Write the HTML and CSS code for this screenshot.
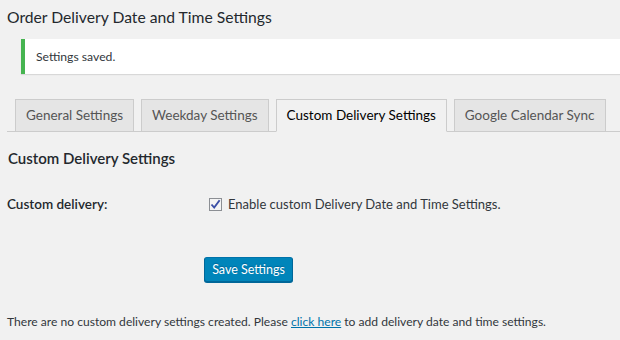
FILE: index.html
```html
<!DOCTYPE html>
<html lang="en">
<head>
    <meta charset="UTF-8">
    <title>Order Delivery Date and Time Settings</title>
    <link rel="stylesheet" href="styles.css">
</head>
<body>
    <div class="wrap">
        <h1>Order Delivery Date and Time Settings</h1>
        <div class="notice">
            <p>Settings saved.</p>
        </div>
        <nav class="tabs">
            <a href="#" class="tab">General Settings</a>
            <a href="#" class="tab">Weekday Settings</a>
            <a href="#" class="tab tab-active">Custom Delivery Settings</a>
            <a href="#" class="tab">Google Calendar Sync</a>
        </nav>
        <h2>Custom Delivery Settings</h2>
        <div class="field-row">
            <div class="field-label">Custom delivery:</div>
            <label class="field-input">
                <span class="check">
                    <svg width="11" height="11" viewBox="0 0 11 11"><path d="M1.5 5.5 L4.2 8.6 L9.6 1.2" fill="none" stroke="#3b4fa6" stroke-width="1.9"/></svg>
                </span>
                Enable custom Delivery Date and Time Settings.
            </label>
        </div>
        <div class="actions">
            <button type="button" class="button-primary">Save Settings</button>
        </div>
        <p class="empty-note">There are no custom delivery settings created. Please <a href="#">click here</a> to add delivery date and time settings.</p>
    </div>
</body>
</html>
```

FILE: styles.css
```css
body {
    margin: 0;
    background-color: #f1f1f1;
    color: #23282d;
    font-family: Lato, "Open Sans", sans-serif;
    font-size: 12px;
}
.wrap {
    padding: 0 0 0 7px;
}
h1 {
    margin: 0;
    padding-top: 6px;
    font-size: 15.7px;
    font-weight: 400;
    line-height: 22px;
}
.notice {
    margin: 11px 0 0 14px;
    height: 35px;
    background-color: #fff;
    border-left: 4px solid #46b450;
    box-shadow: 0 1px 1px rgba(0, 0, 0, 0.1);
    display: flex;
    align-items: center;
    padding-left: 11px;
}
.notice p {
    margin: 0;
    font-size: 12.2px;
    color: #32373c;
}
.tabs {
    margin-top: 25px;
    padding-left: 8px;
    height: 32px;
    border-bottom: 1px solid #ccc;
    display: flex;
    gap: 7px;
}
.tab {
    flex-shrink: 0;
    box-sizing: border-box;
    height: 33px;
    margin-bottom: -1px;
    padding: 0 10px;
    border: 1px solid #ccc;
    background-color: #e5e5e5;
    color: #555;
    font-size: 13.5px;
    font-weight: 400;
    line-height: 31px;
    white-space: nowrap;
    text-decoration: none;
}
.tab-active {
    background-color: #f1f1f1;
    border-bottom-color: #f1f1f1;
    color: #000;
}
h2 {
    margin: 15px 0 0 1px;
    font-size: 15px;
    font-weight: 600;
    line-height: 22px;
}
.field-row {
    margin-top: 25px;
    display: grid;
    grid-template-columns: 202px 1fr;
    align-items: center;
    line-height: 20px;
}
.field-label {
    font-size: 13.5px;
    font-weight: 600;
}
.field-input {
    display: flex;
    align-items: center;
    gap: 6px;
    font-size: 13px;
    color: #32373c;
}
.check {
    box-sizing: border-box;
    width: 13px;
    height: 13px;
    border: 1px solid #8c8f94;
    background-color: #f4f4f4;
    display: flex;
    align-items: center;
    justify-content: center;
}
.actions {
    margin-top: 43px;
    padding-left: 197px;
}
.button-primary {
    box-sizing: border-box;
    height: 25px;
    width: 89px;
    padding: 0;
    background-color: #0085ba;
    border: 1px solid #0073aa;
    border-color: #0073aa #006799 #006799;
    border-radius: 3px;
    box-shadow: 0 1px 0 #006799;
    color: #fff;
    font-family: inherit;
    font-size: 12.5px;
    text-shadow: 0 -1px 1px #006799;
}
.empty-note {
    margin: 32px 0 0;
    font-size: 12.1px;
    color: #32373c;
}
.empty-note a {
    color: #0073aa;
}
```
